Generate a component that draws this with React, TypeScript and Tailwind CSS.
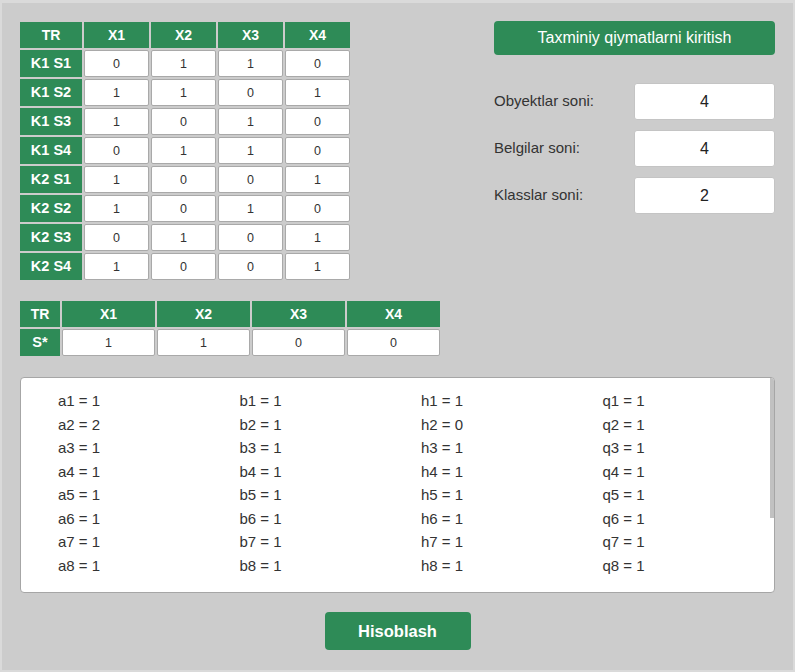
const cols = ["X1", "X2", "X3", "X4"];

const rows: { label: string; values: number[] }[] = [
  { label: "K1 S1", values: [0, 1, 1, 0] },
  { label: "K1 S2", values: [1, 1, 0, 1] },
  { label: "K1 S3", values: [1, 0, 1, 0] },
  { label: "K1 S4", values: [0, 1, 1, 0] },
  { label: "K2 S1", values: [1, 0, 0, 1] },
  { label: "K2 S2", values: [1, 0, 1, 0] },
  { label: "K2 S3", values: [0, 1, 0, 1] },
  { label: "K2 S4", values: [1, 0, 0, 1] },
];

const sample = [1, 1, 0, 0];

const results: { key: string; values: number[] }[] = [
  { key: "a", values: [1, 2, 1, 1, 1, 1, 1, 1] },
  { key: "b", values: [1, 1, 1, 1, 1, 1, 1, 1] },
  { key: "h", values: [1, 0, 1, 1, 1, 1, 1, 1] },
  { key: "q", values: [1, 1, 1, 1, 1, 1, 1, 1] },
];

const fields = [
  { label: "Obyektlar soni:", value: "4" },
  { label: "Belgilar soni:", value: "4" },
  { label: "Klasslar soni:", value: "2" },
];

const Head = ({ children, className = "" }: { children: React.ReactNode; className?: string }) => (
  <div className={`flex items-center justify-center bg-[#2e8b57] text-white font-bold ${className}`}>
    {children}
  </div>
);

const Cell = ({ value }: { value: number }) => (
  <input
    readOnly
    value={value}
    className="w-full h-full min-w-0 bg-white border border-[#a9a9a9] rounded-[2px] text-center text-[12.5px] text-[#333] outline-none"
  />
);

export default function App() {
  return (
    <div className="min-h-screen bg-[#dadada] pt-[3px] px-[2px]" style={{ fontFamily: '"Liberation Sans", Arial, sans-serif' }}>
      <div className="bg-[#cccccc] h-[667px] px-[18px] pt-[18px]">
        <div className="flex justify-between items-start">
          {/* main table */}
          <div className="mt-[1px] grid grid-cols-[62px_repeat(4,65px)] grid-rows-[26px_repeat(8,27px)] gap-[2px]">
            <Head className="text-[14px]">TR</Head>
            {cols.map((c) => (
              <Head key={c} className="text-[14px]">{c}</Head>
            ))}
            {rows.map((r) => (
              <div key={r.label} className="contents">
                <Head className="text-[14.5px]">{r.label}</Head>
                {r.values.map((v, i) => (
                  <Cell key={i} value={v} />
                ))}
              </div>
            ))}
          </div>

          {/* right side */}
          <div className="w-[281px]">
            <button className="w-full h-[34px] bg-[#2e8b57] text-white text-[16px] rounded-[4px]">
              Taxminiy qiymatlarni kiritish
            </button>
            <div className="mt-[28px] flex flex-col gap-[10px]">
              {fields.map((f) => (
                <div key={f.label} className="flex items-center">
                  <span className="w-[140px] text-[15px] text-[#333]">{f.label}</span>
                  <input
                    readOnly
                    value={f.value}
                    className="flex-1 min-w-0 h-[37px] bg-white border border-[#c4c4c4] rounded-[3px] text-center text-[16px] text-[#222] outline-none"
                  />
                </div>
              ))}
            </div>
          </div>
        </div>

        {/* sample table */}
        <div className="mt-[21px] grid grid-cols-[40px_repeat(4,93px)] grid-rows-[26px_27px] gap-[2px] w-max">
          <Head className="text-[14px]">TR</Head>
          {cols.map((c) => (
            <Head key={c} className="text-[14px]">{c}</Head>
          ))}
          <Head className="text-[14.5px]">S*</Head>
          {sample.map((v, i) => (
            <Cell key={i} value={v} />
          ))}
        </div>

        {/* results */}
        <div className="relative mt-[21px] h-[216px] bg-white border border-[#a6a6a6] rounded-[4px] overflow-hidden">
          <div className="pt-[11px] pl-[37px] grid grid-cols-[repeat(4,181.5px)] text-[15px] leading-[23.57px] text-[#333]">
            {results.map((col) => (
              <div key={col.key} className="flex flex-col">
                {col.values.map((v, i) => (
                  <span key={i}>
                    {col.key}
                    {i + 1} = {v}
                  </span>
                ))}
              </div>
            ))}
          </div>
          <div className="absolute right-0 top-0 w-[4px] h-[140px] bg-[#c1c1c1]" />
        </div>

        <div className="mt-[19px] flex justify-center">
          <button className="w-[146px] h-[38px] bg-[#2e8b57] text-white text-[16.5px] font-bold rounded-[4px]">
            Hisoblash
          </button>
        </div>
      </div>
    </div>
  );
}
